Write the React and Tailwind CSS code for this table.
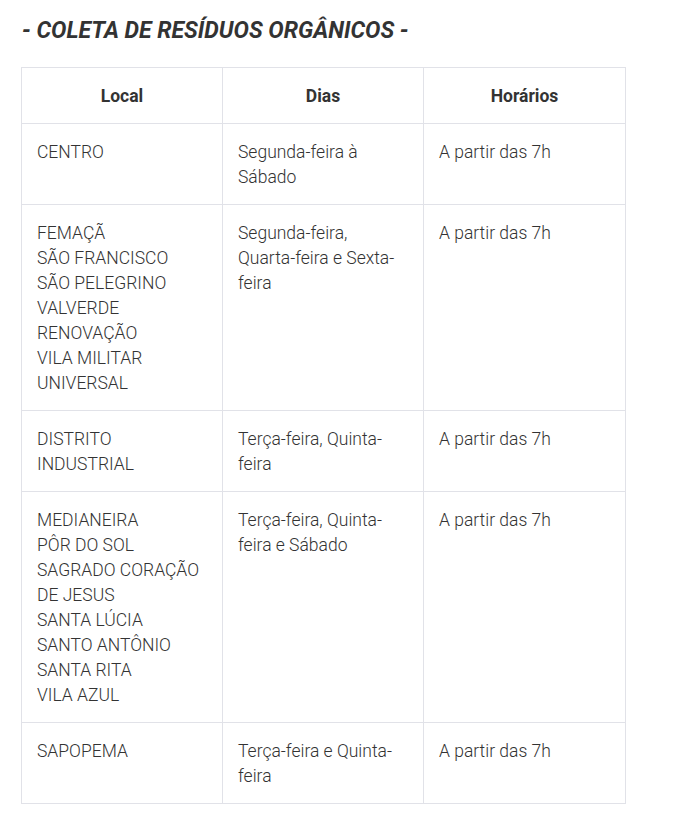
import React from 'react';

const rows = [
  { local: ['CENTRO'], dias: 'Segunda-feira à Sábado' },
  {
    local: ['FEMAÇÃ', 'SÃO FRANCISCO', 'SÃO PELEGRINO', 'VALVERDE', 'RENOVAÇÃO', 'VILA MILITAR', 'UNIVERSAL'],
    dias: 'Segunda-feira, Quarta-feira e Sexta-feira',
  },
  { local: ['DISTRITO INDUSTRIAL'], dias: 'Terça-feira, Quinta-feira' },
  {
    local: ['MEDIANEIRA', 'PÔR DO SOL', 'SAGRADO CORAÇÃO DE JESUS', 'SANTA LÚCIA', 'SANTO ANTÔNIO', 'SANTA RITA', 'VILA AZUL'],
    dias: 'Terça-feira, Quinta-feira e Sábado',
  },
  { local: ['SAPOPEMA'], dias: 'Terça-feira e Quinta-feira' },
];

const App = () => {
  return (
    <div className="min-h-[819px] bg-white font-['Roboto',sans-serif] text-[#333]">
      <div className="pl-[22px] pt-[18px]">
        <h2 className="text-[23px] leading-[26px] font-bold italic text-[#333]">
          - COLETA DE RESÍDUOS ORGÂNICOS -
        </h2>
        <table className="mt-[23px] ml-[-1px] w-[604px] table-fixed border-collapse text-[17.5px] leading-[25px] font-light">
          <colgroup>
            <col className="w-[201px]" />
            <col className="w-[201px]" />
            <col className="w-[202px]" />
          </colgroup>
          <thead>
            <tr>
              <th className="border border-[#e1e2e8] px-[15px] pt-[16px] pb-[14px] text-center font-bold">Local</th>
              <th className="border border-[#e1e2e8] px-[15px] pt-[16px] pb-[14px] text-center font-bold">Dias</th>
              <th className="border border-[#e1e2e8] px-[15px] pt-[16px] pb-[14px] text-center font-bold">Horários</th>
            </tr>
          </thead>
          <tbody>
            {rows.map((r, i) => (
              <tr key={i}>
                <td className="border border-[#e1e2e8] px-[15px] pt-[16px] pb-[14px] align-top">
                  {r.local.map((l, j) => (
                    <div key={j}>{l}</div>
                  ))}
                </td>
                <td className="border border-[#e1e2e8] px-[15px] pt-[16px] pb-[14px] align-top">{r.dias}</td>
                <td className="border border-[#e1e2e8] px-[15px] pt-[16px] pb-[14px] align-top">A partir das 7h</td>
              </tr>
            ))}
          </tbody>
        </table>
      </div>
    </div>
  );
};

export default App;
